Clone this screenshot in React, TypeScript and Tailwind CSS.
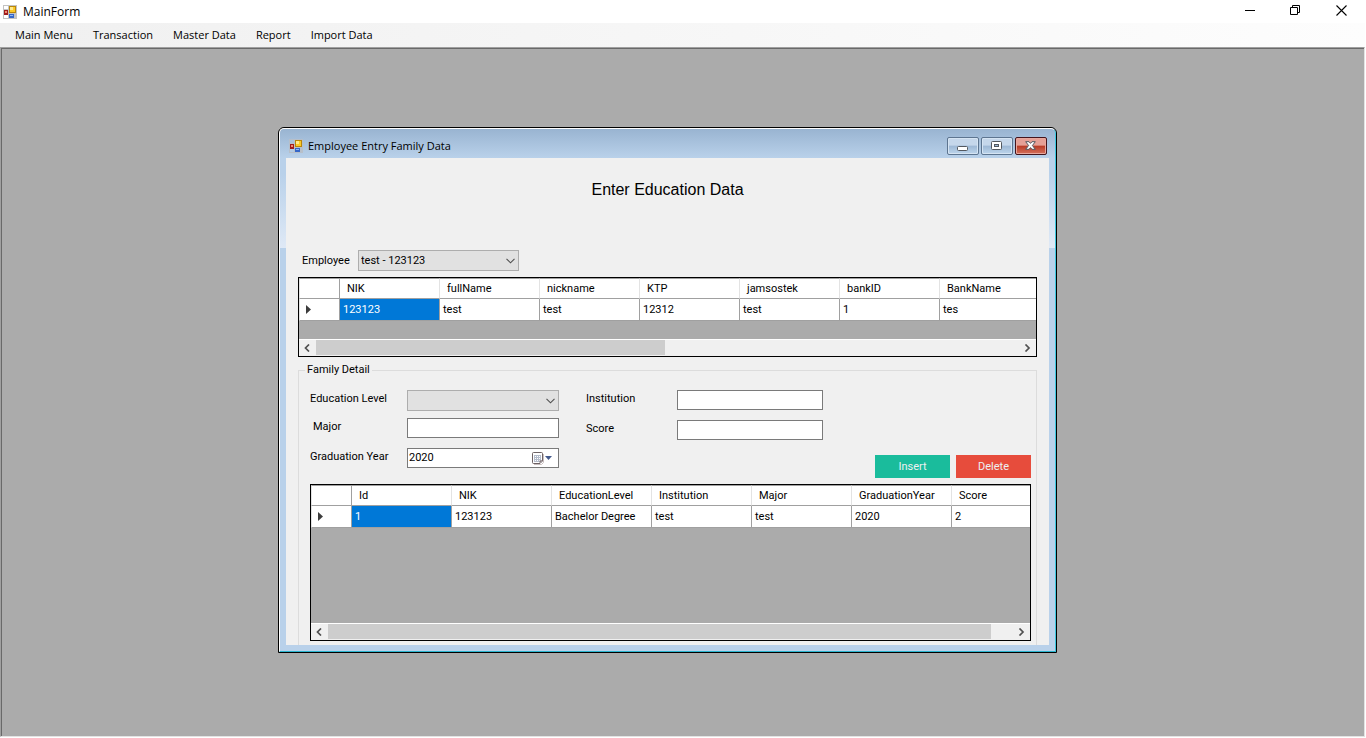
import { useState, type ReactNode } from "react";

function FormIcon({ framed = true }: { framed?: boolean }) {
  return (
    <svg width="14" height="14" viewBox="0 0 14 14" shapeRendering="crispEdges" aria-hidden="true">
      <rect x="0" y="0" width="14" height="14" fill={framed ? "#c3c3c3" : "#b7bfc9"} />
      <rect x="1" y="1" width="4" height="3" fill={framed ? "#ffffff" : "#a9c1dc"} />
      <rect x="1" y="10" width="4" height="3" fill={framed ? "#ffffff" : "#b2cae4"} />
      <rect x="1" y="5" width="4" height="5" fill="#a01c1c" />
      <rect x="2" y="6" width="2" height="2" fill="#f08a70" />
      <rect x="6" y="1" width="7" height="7" fill="#b8860b" />
      <rect x="7" y="2" width="5" height="5" fill="#fbc927" />
      <rect x="7" y="2" width="3" height="3" fill="#ffe98a" />
      <rect x="6" y="9" width="5" height="4" fill="#3566c8" />
      <rect x="7" y="10" width="3" height="1" fill="#8fb8f5" />
    </svg>
  );
}

function ComboBox({ id, value, options, className }: { id: string; value: string; options: string[]; className: string }) {
  const [current, setCurrent] = useState(value);
  return (
    <div className={`relative h-[21px] ${className}`}>
      <select
        id={id}
        value={current}
        onChange={(e) => setCurrent(e.target.value)}
        className="h-full w-full appearance-none border border-[#adadad] bg-[#e1e1e1] pr-5 pl-[2px] outline-none"
      >
        {options.map((o) => (
          <option key={o} value={o}>
            {o}
          </option>
        ))}
      </select>
      <svg className="pointer-events-none absolute top-2 right-1" width="9" height="6" viewBox="0 0 9 6" aria-hidden="true">
        <path d="M0.5 0.8 4.5 4.8 8.5 0.8" fill="none" stroke="#505050" strokeWidth="1.1" />
      </svg>
    </div>
  );
}

function Field({ id, label, indent = "", children, labelWidth }: { id: string; label: string; indent?: string; children: ReactNode; labelWidth: string }) {
  return (
    <div className="flex items-start">
      <label htmlFor={id} className={`shrink-0 leading-[18px] ${labelWidth} ${indent}`}>
        {label}
      </label>
      {children}
    </div>
  );
}

function TextBox({ id, className }: { id: string; className: string }) {
  return <input id={id} type="text" className={`h-5 border border-[#7a7a7a] bg-white px-[2px] outline-none ${className}`} />;
}

function ScrollBar({ thumb }: { thumb: string }) {
  return (
    <div className="flex h-[17px] shrink-0 border-t border-white bg-[#f0f0f0]">
      <button type="button" aria-label="Scroll left" className="flex w-[17px] items-center justify-center">
        <svg width="7" height="8" viewBox="0 0 7 8" aria-hidden="true">
          <path d="M5 0.5 1.5 4 5 7.5" fill="none" stroke="#505050" strokeWidth="1.7" />
        </svg>
      </button>
      <div className="flex-1 pb-px">
        <div className={`h-full bg-[#cdcdcd] ${thumb}`} />
      </div>
      <button type="button" aria-label="Scroll right" className="flex w-[17px] items-center justify-center">
        <svg width="7" height="8" viewBox="0 0 7 8" aria-hidden="true">
          <path d="M1.5 0.5 5 4 1.5 7.5" fill="none" stroke="#505050" strokeWidth="1.7" />
        </svg>
      </button>
    </div>
  );
}

function DataGrid({ columns, row, height, thumb }: { columns: string[]; row: string[]; height: string; thumb: string }) {
  return (
    <div className={`flex flex-col border border-black bg-[#ababab] ${height}`}>
      <div className="min-h-0 flex-1 overflow-hidden">
        <table className="w-[741px] table-fixed border-separate border-spacing-0 bg-white text-left">
          <thead>
            <tr className="h-[21px]">
              <th className="w-[41px] border-t border-r border-b border-l border-[#a0a0a0] border-l-[#e3e3e3] p-0" aria-label="Row" />
              {columns.map((c) => (
                <th key={c} className="border-t border-r border-b border-[#a0a0a0] border-r-[#e3e3e3] p-0 pl-[7px] font-normal whitespace-nowrap">
                  {c}
                </th>
              ))}
            </tr>
          </thead>
          <tbody>
            <tr className="h-[22px]">
              <th className="border-r border-b border-l border-[#a0a0a0] border-l-[#e3e3e3] p-0 pl-[6px]" aria-label="Current row">
                <svg width="5" height="9" viewBox="0 0 5 9" aria-hidden="true">
                  <path d="M0 0 5 4.5 0 9z" fill="#3c3c3c" />
                </svg>
              </th>
              {row.map((v, i) => (
                <td
                  key={i}
                  className={`border-r border-b border-[#a0a0a0] p-0 pl-[3px] whitespace-nowrap ${i === 0 ? "bg-[#0078d7] text-white" : ""}`}
                >
                  {v}
                </td>
              ))}
            </tr>
          </tbody>
        </table>
      </div>
      <ScrollBar thumb={thumb} />
    </div>
  );
}

const captionButton =
  "flex h-[18px] w-8 items-center justify-center rounded-[2px] border border-[#5d7590] bg-linear-to-b from-[#c5d7eb] from-45% via-[#9db8d5] via-50% to-[#bdd5ec] shadow-[inset_0_0_0_1px_#d5e4f3]";

function EducationWindow() {
  return (
    <section className="absolute top-[78px] left-[276px] flex w-[779px] flex-col overflow-hidden rounded-t-[6px] border border-black font-['Roboto',sans-serif] text-[11px] leading-4">
      <div className="flex flex-col rounded-t-[5px] border border-t-white border-r-[#3cc8e0] border-b-[#2bb5cf] border-l-white bg-[linear-gradient(to_bottom,#99b4d1_0px,#b9d1ea_29px,#b9d1ea_45px,#dfe9f6_119px,#b9d1ea_119px)] px-[6px] pb-[6px]">
        <header className="flex h-[29px] items-center pt-1 pl-[3px] font-['Open_Sans',sans-serif]">
          <div className="flex flex-1 items-center gap-[5px]">
            <FormIcon framed={false} />
            <h2>Employee Entry Family Data</h2>
          </div>
          <div className="flex gap-[2px] pr-[2px]">
            <button type="button" aria-label="Minimize" className={captionButton}>
              <svg width="12" height="12" viewBox="0 0 12 12" aria-hidden="true">
                <rect x="0.5" y="6.5" width="10" height="4" rx="1" fill="#fff" stroke="#53585f" />
              </svg>
            </button>
            <button type="button" aria-label="Maximize" className={captionButton}>
              <svg width="12" height="10" viewBox="0 0 12 10" aria-hidden="true">
                <rect x="0.5" y="0.5" width="10" height="8" rx="1" fill="#fff" stroke="#53585f" />
                <rect x="3.5" y="3.5" width="4" height="2" fill="#9db8d5" stroke="#53585f" />
              </svg>
            </button>
            <button
              type="button"
              aria-label="Close window"
              className="flex h-[18px] w-8 items-center justify-center rounded-[2px] border border-[#43151d] bg-linear-to-b from-[#e5a096] from-45% via-[#b83a24] via-50% to-[#d4705c] shadow-[inset_0_0_0_1px_#e8a79d]"
            >
              <svg width="12" height="10" viewBox="0 0 12 10" aria-hidden="true">
                <path d="M0.7 0.7H4L5.5 2.4 7 0.7H10.3L7.4 4.5 10.3 8.3H7L5.5 6.6 4 8.3H0.7L3.6 4.5z" fill="#fff" stroke="#53585f" />
              </svg>
            </button>
          </div>
        </header>

        <main className="flex h-[487px] flex-col overflow-hidden bg-[#f0f0f0] px-3">
          <h1 className="pt-5 text-center font-['Liberation_Sans',sans-serif] text-[16px] leading-6">Enter Education Data</h1>

          <div className="mt-12 flex items-center pl-1">
            <label htmlFor="employee" className="w-14">
              Employee
            </label>
            <ComboBox id="employee" value="test - 123123" options={["test - 123123"]} className="w-[161px]" />
          </div>

          <div className="mt-[6px]">
            <DataGrid
              columns={["NIK", "fullName", "nickname", "KTP", "jamsostek", "bankID", "BankName"]}
              row={["123123", "test", "test", "12312", "test", "1", "tes"]}
              height="h-20"
              thumb="w-[349px]"
            />
          </div>

          <fieldset className="mt-[5px] min-w-0 shrink-0 border border-[#dcdcdc] pr-[5px] pb-4 pl-[11px]">
            <legend className="-ml-[5px] px-[2px]">Family Detail</legend>
            <div className="mt-3 flex items-start">
              <div className="flex w-[276px] flex-col">
                <div className="h-7">
                  <Field id="level" label="Education Level" labelWidth="w-[97px]">
                    <ComboBox id="level" value="" options={["", "Bachelor Degree"]} className="w-[152px]" />
                  </Field>
                </div>
                <div className="h-[30px]">
                  <Field id="major" label="Major" labelWidth="w-[97px]" indent="pl-[3px]">
                    <TextBox id="major" className="w-[152px]" />
                  </Field>
                </div>
                <Field id="year" label="Graduation Year" labelWidth="w-[97px]">
                  <div className="flex h-5 w-[152px] items-center border border-[#7a7a7a] bg-white pr-1">
                    <input id="year" type="text" defaultValue="2020" className="min-w-0 flex-1 pl-px outline-none" />
                    <button type="button" aria-label="Open calendar" className="flex items-center">
                      <svg width="22" height="13" viewBox="0 0 22 13" aria-hidden="true">
                        <path d="M2 12.5H9.5L11.5 10.5V2" fill="none" stroke="#c9bfbf" />
                        <path d="M1.5 0.5H9.5Q10.5 0.5 10.5 1.5V9L8 11.5H1.5Q0.5 11.5 0.5 10.5V1.5Q0.5 0.5 1.5 0.5z" fill="#fff" stroke="#6d6265" />
                        <path d="M2 3.5H9M2 5.5H9M2 7.5H9M2 9.5H8M2.5 3V10M4.5 3V10M6.5 3V10M8.5 3V9" stroke="#b4bccb" />
                        <path d="M11 8 7.5 11.5V8.5z" fill="#8c8083" />
                        <path d="M13 4H20L16.5 8z" fill="#44598c" />
                      </svg>
                    </button>
                  </div>
                </Field>
              </div>
              <div className="flex flex-1 flex-col gap-[10px]">
                <Field id="institution" label="Institution" labelWidth="w-[91px]">
                  <TextBox id="institution" className="w-[146px]" />
                </Field>
                <Field id="score" label="Score" labelWidth="w-[91px]">
                  <TextBox id="score" className="w-[146px]" />
                </Field>
                <div className="mt-[5px] flex justify-end gap-[6px]">
                  <button type="button" className="h-[23px] w-[75px] bg-[#1abc9c] text-[#ecf0f1]">
                    Insert
                  </button>
                  <button type="button" className="h-[23px] w-[75px] bg-[#e74c3c] text-[#ecf0f1]">
                    Delete
                  </button>
                </div>
              </div>
            </div>
            <div className="mt-[6px]">
              <DataGrid
                columns={["Id", "NIK", "EducationLevel", "Institution", "Major", "GraduationYear", "Score"]}
                row={["1", "123123", "Bachelor Degree", "test", "test", "2020", "2"]}
                height="h-[157px]"
                thumb="w-[663px]"
              />
            </div>
          </fieldset>
        </main>
      </div>
    </section>
  );
}

const menuItems = ["Main Menu", "Transaction", "Master Data", "Report", "Import Data"];

export default function App() {
  return (
    <div className="flex min-h-screen flex-col bg-white pr-px pb-px font-['Open_Sans',sans-serif] text-[11px] leading-4 text-black">
      <header className="flex h-[23px] items-center justify-between pl-[3px]">
        <div className="flex items-center gap-[6px] text-[12px]">
          <FormIcon />
          <span>MainForm</span>
        </div>
        <div className="flex h-full pb-[2px]">
          <button type="button" aria-label="Minimize application" className="flex w-[46px] items-center justify-center">
            <svg width="11" height="11" viewBox="0 0 11 11" aria-hidden="true">
              <path d="M0 5.5H10" stroke="#000" />
            </svg>
          </button>
          <button type="button" aria-label="Restore application" className="flex w-[46px] items-center justify-center">
            <svg width="12" height="11" viewBox="0 0 12 11" aria-hidden="true">
              <path d="M0.5 2.5H7.5V9.5H0.5zM2.5 2.5V0.5H9.5V7.5H7.5" fill="none" stroke="#000" />
            </svg>
          </button>
          <button type="button" aria-label="Close application" className="flex w-[46px] items-center justify-center">
            <svg width="12" height="11" viewBox="0 0 12 11" aria-hidden="true">
              <path d="M0.5 0.5 10.5 10.5M10.5 0.5 0.5 10.5" stroke="#000" strokeWidth="1.1" />
            </svg>
          </button>
        </div>
      </header>
      <nav className="flex h-6 items-center gap-5 bg-linear-to-r from-[#f0f0f0] to-[#fdfdfd] pl-[15px]">
        {menuItems.map((m) => (
          <button key={m} type="button">
            {m}
          </button>
        ))}
      </nav>
      <div className="flex flex-1 border border-t-[#a0a0a0] border-r-[#e3e3e3] border-b-[#e3e3e3] border-l-[#a0a0a0]">
        <div className="relative min-h-[640px] flex-1 border-t border-l border-[#696969] bg-[#ababab]">
          <EducationWindow />
        </div>
      </div>
    </div>
  );
}
